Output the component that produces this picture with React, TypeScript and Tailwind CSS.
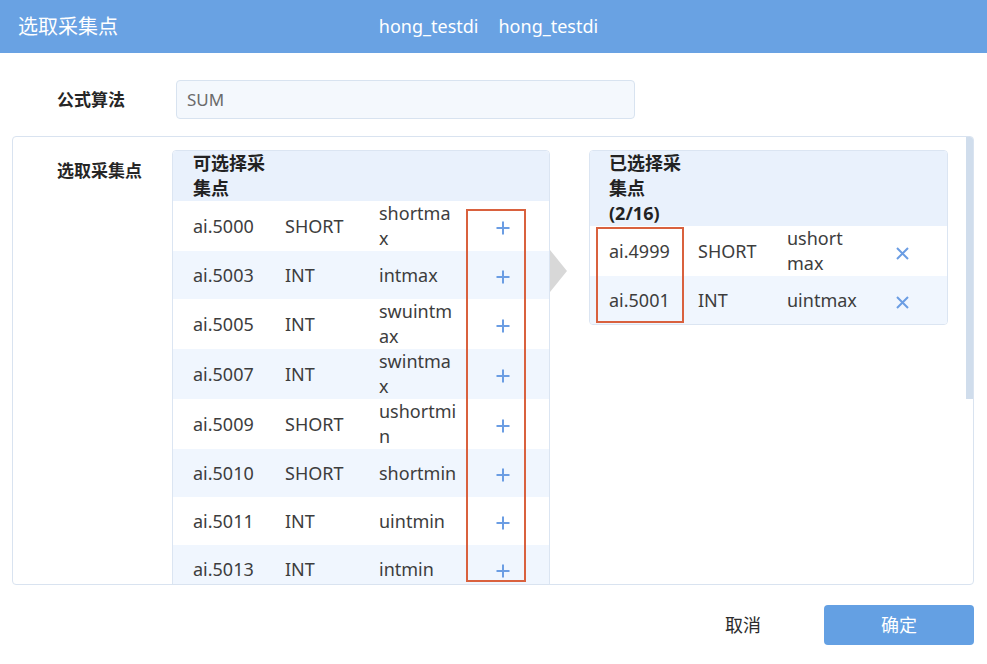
import React from 'react';

type Point = { id: string; type: string; name: string[] };

const available: Point[] = [
  { id: 'ai.5000', type: 'SHORT', name: ['shortma', 'x'] },
  { id: 'ai.5003', type: 'INT', name: ['intmax'] },
  { id: 'ai.5005', type: 'INT', name: ['swuintm', 'ax'] },
  { id: 'ai.5007', type: 'INT', name: ['swintma', 'x'] },
  { id: 'ai.5009', type: 'SHORT', name: ['ushortmi', 'n'] },
  { id: 'ai.5010', type: 'SHORT', name: ['shortmin'] },
  { id: 'ai.5011', type: 'INT', name: ['uintmin'] },
  { id: 'ai.5013', type: 'INT', name: ['intmin'] },
];

const selected: Point[] = [
  { id: 'ai.4999', type: 'SHORT', name: ['ushort', 'max'] },
  { id: 'ai.5001', type: 'INT', name: ['uintmax'] },
];

const PlusIcon = () => (
  <svg width="14" height="14" viewBox="0 0 14 14" className="mt-[4px]">
    <path d="M7 0.5v13M0.5 7h13" stroke="#6b9de3" strokeWidth="2" />
  </svg>
);

const CloseIcon = () => (
  <svg width="13" height="13" viewBox="0 0 13 13" className="mt-[4px]">
    <path d="M1 1l11 11M12 1L1 12" stroke="#6b9de3" strokeWidth="2" />
  </svg>
);

const Lines = ({ lines }: { lines: string[] }) => (
  <div className="leading-[25px] whitespace-nowrap">
    {lines.map((l, i) => (
      <div key={i}>{l}</div>
    ))}
  </div>
);

export default function App() {
  return (
    <div
      className="w-[987px] h-[664px] bg-white text-[#3d3d3d] overflow-hidden"
      style={{ fontFamily: '"Noto Sans", "Noto Sans CJK SC", sans-serif' }}
    >
      {/* title bar */}
      <div className="h-[53px] bg-[#69a2e3] grid grid-cols-[1fr_auto_1fr] items-center text-white">
        <div className="pl-[18px] text-[20px]">选取采集点</div>
        <div className="flex gap-[20px] text-[18px] pr-[10px]">
          <span>hong_testdi</span>
          <span>hong_testdi</span>
        </div>
        <div />
      </div>

      {/* formula */}
      <div className="mt-[27px] flex items-center">
        <div className="pl-[57px] w-[176px] text-[17px] font-bold text-[#262626]">公式算法</div>
        <div className="w-[459px] h-[39px] rounded-[4px] border border-[#d8e3f0] bg-[#f4f8fd] flex items-center pl-[10px] text-[17px] text-[#6b6b6b]">
          SUM
        </div>
      </div>

      {/* points box */}
      <div className="mt-[17px] ml-[12px] w-[962px] h-[449px] border border-[#d9e3f0] rounded-[4px] relative overflow-hidden flex pt-[13px]">
        <div className="w-[159px] shrink-0 pl-[44px] pt-[8px] text-[17px] font-bold text-[#262626]">选取采集点</div>

        {/* available */}
        <div className="w-[378px] shrink-0 self-start border border-[#dbe5f2] rounded-[4px] relative text-[18px]">
          <div className="h-[50px] bg-[#e9f1fc] pl-[20px] font-bold text-[#222] leading-[25px] rounded-t-[4px]">
            <div>可选择采</div>
            <div>集点</div>
          </div>
          {available.map((p, i) => (
            <div
              key={p.id}
              className={`flex items-center min-h-[48px] ${i % 2 === 1 ? 'bg-[#f0f6fe]' : 'bg-white'}`}
            >
              <div className="w-[92px] pl-[20px]">{p.id}</div>
              <div className="w-[94px] pl-[20px]">{p.type}</div>
              <div className="w-[98px] pl-[20px]">
                <Lines lines={p.name} />
              </div>
              <div className="flex-1 flex justify-center">
                <PlusIcon />
              </div>
            </div>
          ))}
          <div className="absolute left-[293px] top-[58px] w-[60px] h-[373px] border-2 border-[#d9613e]" />
        </div>

        {/* arrow */}
        <div className="w-[39px] shrink-0 pt-[100px]">
          <div className="w-0 h-0 border-l-[17px] border-l-[#d8d8d8] border-y-[21px] border-y-transparent" />
        </div>

        {/* selected */}
        <div className="w-[359px] shrink-0 self-start border border-[#dbe5f2] rounded-[4px] relative text-[18px] overflow-hidden">
          <div className="h-[75px] bg-[#e9f1fc] pl-[19px] font-bold text-[#222] leading-[25px]">
            <div>已选择采</div>
            <div>集点</div>
            <div>(2/16)</div>
          </div>
          {selected.map((p, i) => (
            <div
              key={p.id}
              className={`flex items-center min-h-[48px] ${i % 2 === 1 ? 'bg-[#f0f6fe]' : 'bg-white'}`}
            >
              <div className="w-[88px] pl-[19px]">{p.id}</div>
              <div className="w-[89px] pl-[20px]">{p.type}</div>
              <div className="w-[90px] pl-[20px]">
                <Lines lines={p.name} />
              </div>
              <div className="flex-1 flex justify-center">
                <CloseIcon />
              </div>
            </div>
          ))}
          <div className="absolute left-[6px] top-[76px] w-[88px] h-[96px] border-2 border-[#d9613e]" />
        </div>

        {/* scrollbar thumb */}
        <div className="absolute right-0 top-0 w-[7px] h-[262px] bg-[#d0ddec]" />
      </div>

      {/* footer */}
      <div className="mt-[20px] flex justify-end gap-[6px] pr-[13px] text-[18px]">
        <button className="w-[150px] h-[40px] text-[#2b2b2b]">取消</button>
        <button className="w-[150px] h-[40px] rounded-[4px] bg-[#64a0e3] text-white">确定</button>
      </div>
    </div>
  );
}
